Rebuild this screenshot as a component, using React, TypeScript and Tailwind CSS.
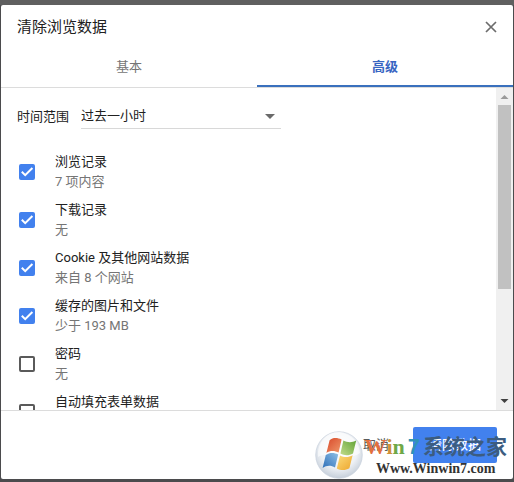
import { useState } from "react";
import clsx from "clsx";

type DataItem = {
  id: string;
  title: string;
  detail: string;
  checked: boolean;
};

const dataItems: DataItem[] = [
  { id: "history", title: "浏览记录", detail: "7 项内容", checked: true },
  { id: "downloads", title: "下载记录", detail: "无", checked: true },
  {
    id: "cookies",
    title: "Cookie 及其他网站数据",
    detail: "来自 8 个网站",
    checked: true,
  },
  {
    id: "cache",
    title: "缓存的图片和文件",
    detail: "少于 193 MB",
    checked: true,
  },
  { id: "passwords", title: "密码", detail: "无", checked: false },
  { id: "autofill", title: "自动填充表单数据", detail: "", checked: false },
];

const tabs = ["基本", "高级"];

function CheckRow({ item }: { item: DataItem }) {
  const [checked, setChecked] = useState(item.checked);

  return (
    <li>
      <label htmlFor={item.id} className="flex h-12 items-center gap-5">
        <span className="grid size-4 shrink-0">
          <input
            id={item.id}
            type="checkbox"
            checked={checked}
            onChange={(e) => setChecked(e.target.checked)}
            className="col-start-1 row-start-1 size-4 appearance-none rounded-[2px] border-2 border-[#5a5a5a] checked:border-[#4281ee] checked:bg-[#4281ee]"
          />
          {checked && (
            <svg
              viewBox="0 0 16 16"
              className="pointer-events-none col-start-1 row-start-1 size-4"
              fill="none"
              stroke="#fff"
              strokeWidth="2"
            >
              <path d="M2.8 7.8 6.2 11.2 13.4 4" />
            </svg>
          )}
        </span>
        <span className="flex h-10 flex-col leading-5">
          <span className="text-[#212121]">{item.title}</span>
          <span className="text-[#757575]">{item.detail}</span>
        </span>
      </label>
    </li>
  );
}

function Scrollbar() {
  return (
    <div className="flex w-[17px] shrink-0 flex-col items-center bg-[#f0f0f0]">
      <svg viewBox="0 0 17 17" className="size-[17px]" fill="#9a9a9a">
        <path d="M8.5 7 12.5 11H4.5Z" />
      </svg>
      <div className="flex w-[13px] flex-1 flex-col">
        <div className="basis-[64%] bg-[#c1c1c1]" />
      </div>
      <svg viewBox="0 0 17 17" className="size-[17px]" fill="#404040">
        <path d="M8.5 10 4.5 6H12.5Z" />
      </svg>
    </div>
  );
}

function WindowsOrb() {
  return (
    <svg viewBox="0 0 48 48" className="size-12 shrink-0">
      <defs>
        <radialGradient id="orb" cx="50%" cy="40%" r="60%">
          <stop offset="0" stopColor="#ffffff" />
          <stop offset="0.65" stopColor="#eef1f5" />
          <stop offset="1" stopColor="#c6cfda" />
        </radialGradient>
        <linearGradient id="red" x1="0" y1="0" x2="1" y2="1">
          <stop offset="0" stopColor="#d9492a" />
          <stop offset="1" stopColor="#ef9a6c" />
        </linearGradient>
        <linearGradient id="green" x1="0" y1="1" x2="1" y2="0">
          <stop offset="0" stopColor="#c3dc8c" />
          <stop offset="1" stopColor="#62a437" />
        </linearGradient>
        <linearGradient id="blue" x1="0" y1="1" x2="1" y2="0">
          <stop offset="0" stopColor="#2e6fb8" />
          <stop offset="1" stopColor="#8fc0e6" />
        </linearGradient>
        <linearGradient id="yellow" x1="0" y1="0" x2="1" y2="1">
          <stop offset="0" stopColor="#fbdc7c" />
          <stop offset="1" stopColor="#eda52c" />
        </linearGradient>
      </defs>
      <circle cx="24" cy="24" r="23.3" fill="url(#orb)" stroke="#c9d1dc" strokeWidth="0.7" />
      <path d="M3 26C12 20 34 31 45 22C44 5 27 1 24 1C10 1 2 13 3 26Z" fill="#fff" opacity="0.6" />
      <path d="M14.6 9.2C18 6.4 22.4 6.6 26.6 8.6L23.6 21.6C19.6 19.4 15 19.4 11.4 22Z" fill="url(#red)" />
      <path d="M28.4 9.6C32.4 11.8 37 12 41.2 9.6L38 22.4C34 24.8 29.4 24.8 25.4 22.6Z" fill="url(#green)" />
      <path d="M10.8 24C14.6 21.2 19.2 21.4 23.2 23.4L20 36.4C16 34.2 11.6 34.2 7.6 37Z" fill="url(#blue)" />
      <path d="M25 24.4C29 26.4 33.6 26.6 37.6 24.2L34.4 37.2C30.4 39.6 25.8 39.6 21.8 37.4Z" fill="url(#yellow)" />
    </svg>
  );
}

function Watermark() {
  return (
    <div className="pointer-events-none absolute right-1.5 bottom-0 flex items-start gap-px">
      <WindowsOrb />
      <div className="flex flex-col items-center pt-0.5 font-bold whitespace-nowrap">
        <p className="flex items-center font-['Liberation_Serif','Noto_Sans_CJK_SC',serif] text-[22px] leading-7">
          <span className="text-[#e2703f]">W</span>
          <span className="text-[#d0903a]">i</span>
          <span className="text-[#6fa848]">n</span>
          <span className="px-[3px] font-['Liberation_Sans',sans-serif] text-[#2f93b8]">
            7
          </span>
          <span className="text-[21px] text-[#3c5c80]">系统之家</span>
        </p>
        <p className="font-['Liberation_Serif',serif] text-sm leading-4 text-[#333]">
          Www.Winwin7.com
        </p>
      </div>
    </div>
  );
}

export default function App() {
  const [activeTab, setActiveTab] = useState("高级");

  return (
    <main className="flex h-screen flex-col bg-[#4b4b4d] px-px pb-[3px] font-[Roboto,'Noto_Sans_CJK_SC',sans-serif] text-[13px] text-[#212121]">
      <div className="-mx-px h-[5px] shrink-0 bg-[#606060]" />
      <section
        role="dialog"
        aria-labelledby="dialog-title"
        className="relative flex min-h-0 flex-1 flex-col rounded-[2px] bg-white"
      >
        <header className="flex h-11 shrink-0 items-center justify-between px-4">
          <h1 id="dialog-title" className="text-[15px]">
            清除浏览数据
          </h1>
          <button type="button" aria-label="关闭">
            <svg
              viewBox="0 0 12 12"
              className="size-3"
              fill="none"
              stroke="#6c6c6c"
              strokeWidth="1.7"
            >
              <path d="M1 1 11 11M11 1 1 11" />
            </svg>
          </button>
        </header>

        <div role="tablist" className="flex h-[39px] shrink-0 border-b border-[#dcdcdc]">
          {tabs.map((tab) => (
            <button
              key={tab}
              type="button"
              role="tab"
              aria-selected={tab === activeTab}
              onClick={() => setActiveTab(tab)}
              className={clsx(
                "flex-1 border-b-2 pb-px",
                tab === activeTab
                  ? "border-[#3a70bd] font-bold text-[#3765c2]"
                  : "border-transparent text-[#757575]"
              )}
            >
              {tab}
            </button>
          ))}
        </div>

        <div className="flex min-h-0 flex-1">
          <div className="min-w-0 flex-1 overflow-y-auto [scrollbar-width:none]">
            <div className="flex items-center gap-3 px-4 pt-4">
              <label htmlFor="time-range">时间范围</label>
              <div className="grid w-50 items-center border-b border-[#d8d8d8]">
                <select
                  id="time-range"
                  className="col-start-1 row-start-1 h-6 appearance-none bg-transparent"
                >
                  <option>过去一小时</option>
                </select>
                <svg
                  viewBox="0 0 10 5"
                  className="pointer-events-none col-start-1 row-start-1 mr-1.5 h-[5px] w-2.5 justify-self-end"
                  fill="#6a6a6a"
                >
                  <path d="M0 0H10L5 5Z" />
                </svg>
              </div>
            </div>
            <ul className="mt-[19px] px-[18px]">
              {dataItems.map((item) => (
                <CheckRow key={item.id} item={item} />
              ))}
            </ul>
          </div>
          <Scrollbar />
        </div>

        <footer className="flex shrink-0 items-center justify-end gap-6 border-t border-[#dcdcdc] p-4">
          <button type="button" className="text-[#5a5a5a]">
            取消
          </button>
          <button
            type="button"
            className="h-9 rounded-[2px] bg-[#4281ee] px-4 font-medium text-white"
          >
            清除数据
          </button>
        </footer>
        <Watermark />
      </section>
    </main>
  );
}
